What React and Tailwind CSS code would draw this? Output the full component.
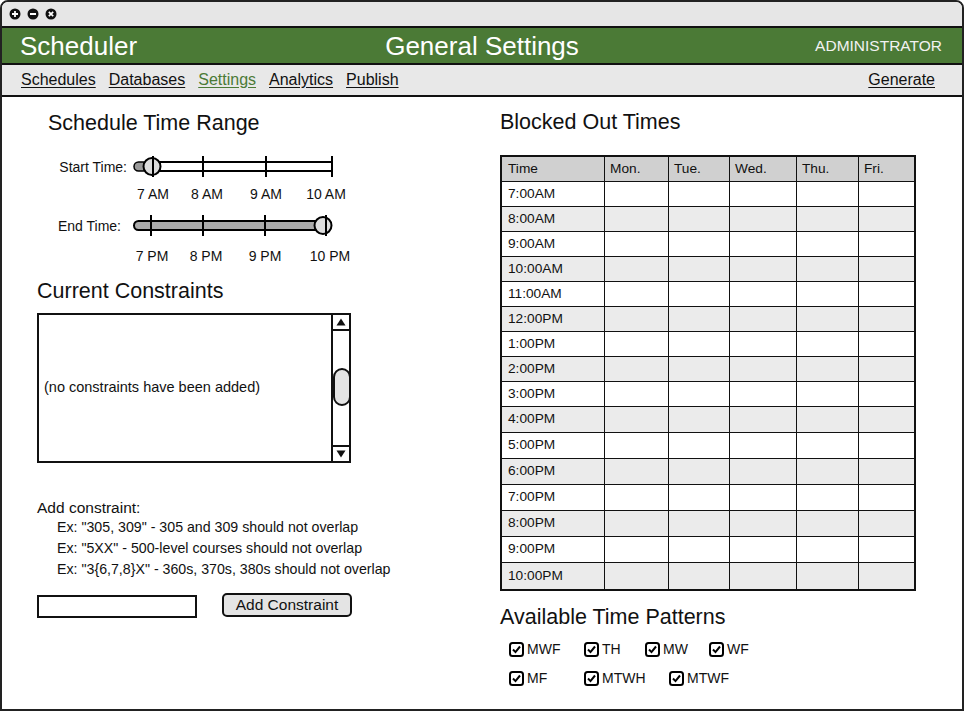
import React from "react";

const font = { fontFamily: '"Liberation Sans", Arial, sans-serif' };

function WinButton({ kind }) {
  return (
    <svg width="12" height="12" viewBox="0 0 12 12">
      <circle cx="6" cy="6" r="5.5" fill="#111" />
      {kind === "plus" && <path d="M3 6h6M6 3v6" stroke="#fff" strokeWidth="1.8" />}
      {kind === "minus" && <path d="M3 6h6" stroke="#fff" strokeWidth="1.8" />}
      {kind === "close" && <path d="M3.8 3.8l4.4 4.4M8.2 3.8l-4.4 4.4" stroke="#fff" strokeWidth="1.7" />}
    </svg>
  );
}

// slider drawing, x=0 maps to page x 131
function StartSlider() {
  return (
    <svg width="204" height="24" viewBox="0 0 204 24">
      <rect x="2" y="7" width="14" height="9" rx="4.5" fill="#999" stroke="#000" strokeWidth="1.5" />
      <rect x="14" y="7" width="186" height="9" fill="#fff" stroke="#000" strokeWidth="2" />
      <line x1="71" y1="1" x2="71" y2="22" stroke="#000" strokeWidth="2" />
      <line x1="134" y1="1" x2="134" y2="22" stroke="#000" strokeWidth="2" />
      <line x1="200" y1="1" x2="200" y2="22" stroke="#000" strokeWidth="2" />
      <circle cx="20" cy="11.5" r="8.5" fill="#ddd" stroke="#000" strokeWidth="2" />
      <line x1="21" y1="1" x2="21" y2="22" stroke="#000" strokeWidth="2" />
    </svg>
  );
}

function EndSlider() {
  return (
    <svg width="204" height="24" viewBox="0 0 204 24">
      <rect x="2" y="7" width="188" height="9" rx="4.5" fill="#aaa" stroke="#000" strokeWidth="2" />
      <line x1="19" y1="1" x2="19" y2="22" stroke="#000" strokeWidth="2" />
      <line x1="71" y1="1" x2="71" y2="22" stroke="#000" strokeWidth="2" />
      <line x1="133" y1="1" x2="133" y2="22" stroke="#000" strokeWidth="2" />
      <circle cx="191" cy="11.5" r="8.5" fill="#ddd" stroke="#000" strokeWidth="2" />
      <line x1="194" y1="1" x2="194" y2="22" stroke="#000" strokeWidth="2" />
    </svg>
  );
}

function Check({ label }) {
  return (
    <div className="flex items-center gap-[3px]">
      <svg width="15" height="15" viewBox="0 0 15 15">
        <rect x="1" y="1" width="13" height="13" rx="2.5" fill="#fff" stroke="#000" strokeWidth="2" />
        <path d="M4 7.5l2.5 2.6L11 4.5" fill="none" stroke="#000" strokeWidth="2" />
      </svg>
      <span className="text-[14px] text-[#111]">{label}</span>
    </div>
  );
}

const times = [
  "7:00AM", "8:00AM", "9:00AM", "10:00AM", "11:00AM", "12:00PM", "1:00PM", "2:00PM",
  "3:00PM", "4:00PM", "5:00PM", "6:00PM", "7:00PM", "8:00PM", "9:00PM", "10:00PM",
];
const days = ["Mon.", "Tue.", "Wed.", "Thu.", "Fri."];
const cols = "grid grid-cols-[103px_64px_61px_67px_62px_50px]";

export default function App() {
  return (
    <div style={font} className="w-[964px] h-[711px] bg-white text-[#111]">
      <div className="w-full h-full border-2 border-[#222] rounded-t-[8px] overflow-hidden flex flex-col">
        {/* title bar */}
        <div className="h-[26px] bg-[#e6e6e6] border-b-2 border-[#111] flex items-center gap-[6px] pl-[7px] shrink-0">
          <WinButton kind="plus" />
          <WinButton kind="minus" />
          <WinButton kind="close" />
        </div>

        {/* header */}
        <div className="h-[37px] bg-[#4b7a36] border-b-2 border-[#111] flex items-center shrink-0 text-white">
          <div className="pl-[18px] text-[26px] leading-none w-[320px]">Scheduler</div>
          <div className="flex-1 text-center text-[26px] leading-none">General Settings</div>
          <div className="w-[320px] text-right pr-[20px] text-[15.5px] leading-none text-[#f2f2f2]">ADMINISTRATOR</div>
        </div>

        {/* nav */}
        <div className="h-[32px] bg-[#e8e8e8] border-b-2 border-[#111] flex items-center shrink-0 text-[16px]">
          <div className="flex gap-[13px] pl-[19px]">
            <span className="underline underline-offset-2">Schedules</span>
            <span className="underline underline-offset-2">Databases</span>
            <span className="underline underline-offset-2 text-[#4b7a36]">Settings</span>
            <span className="underline underline-offset-2">Analytics</span>
            <span className="underline underline-offset-2">Publish</span>
          </div>
          <span className="ml-auto pr-[27px] underline underline-offset-2">Generate</span>
        </div>

        {/* content */}
        <div className="flex-1 flex">
          {/* left column */}
          <div className="w-[498px] flex flex-col">
            <div className="mt-[14px] ml-[46px] text-[21.5px] leading-[24px]">Schedule Time Range</div>

            <div className="mt-[20px] flex items-center h-[24px]">
              <span className="w-[126px] text-right text-[14px] pr-[1px]">Start Time:</span>
              <div className="ml-[4px]"><StartSlider /></div>
            </div>
            <div className="mt-[7px] flex text-[14px] leading-[16px]">
              <span className="ml-[126px] w-[50px] text-center">7 AM</span>
              <span className="ml-[4px] w-[50px] text-center">8 AM</span>
              <span className="ml-[9px] w-[50px] text-center">9 AM</span>
              <span className="ml-[10px] w-[50px] text-center">10 AM</span>
            </div>

            <div className="mt-[12px] flex items-center h-[24px]">
              <span className="w-[120px] text-right text-[14px] pr-[1px]">End Time:</span>
              <div className="ml-[10px]"><EndSlider /></div>
            </div>
            <div className="mt-[10px] flex text-[14px] leading-[16px]">
              <span className="ml-[125px] w-[50px] text-center">7 PM</span>
              <span className="ml-[4px] w-[50px] text-center">8 PM</span>
              <span className="ml-[9px] w-[50px] text-center">9 PM</span>
              <span className="ml-[15px] w-[50px] text-center">10 PM</span>
            </div>

            <div className="mt-[15px] ml-[35px] text-[21.5px] leading-[24px]">Current Constraints</div>

            <div className="mt-[10px] ml-[35px] w-[314px] h-[150px] border-2 border-[#111] flex">
              <div className="flex-1 flex items-center pl-[5px] text-[14.5px]">(no constraints have been added)</div>
              <div className="w-[18px] border-l-2 border-[#111] flex flex-col">
                <div className="h-[16px] border-b-2 border-[#111] flex items-center justify-center">
                  <svg width="10" height="8" viewBox="0 0 10 8"><path d="M5 0.5L9.5 7.5H0.5z" fill="#111" /></svg>
                </div>
                <div className="flex-1 flex flex-col">
                  <div className="mt-[37px] -mr-[2px] h-[38px] bg-[#e4e4e4] border-2 border-[#111] rounded-[9px]" />
                </div>
                <div className="h-[16px] border-t-2 border-[#111] flex items-center justify-center">
                  <svg width="10" height="8" viewBox="0 0 10 8"><path d="M0.5 0.5H9.5L5 7.5z" fill="#111" /></svg>
                </div>
              </div>
            </div>

            <div className="mt-[36px] ml-[35px] text-[15.5px] leading-[18px]">Add constraint:</div>
            <div className="ml-[55px] text-[14.2px] leading-[21px]">
              <div>Ex: "305, 309" - 305 and 309 should not overlap</div>
              <div>Ex: "5XX" - 500-level courses should not overlap</div>
              <div>Ex: "3{"{"}6,7,8{"}"}X" - 360s, 370s, 380s should not overlap</div>
            </div>

            <div className="mt-[13px] ml-[35px] flex items-start">
              <div className="mt-[2px] w-[160px] h-[23px] border-2 border-[#111] bg-white" />
              <div className="ml-[25px] w-[130px] h-[24px] border-2 border-[#111] rounded-[5px] bg-[#e4e4e4] flex items-center justify-center text-[15.5px]">
                Add Constraint
              </div>
            </div>
          </div>

          {/* right column */}
          <div className="flex flex-col">
            <div className="mt-[13px] text-[21.5px] leading-[24px]">Blocked Out Times</div>

            <div className="mt-[21px] w-[416px] border-2 border-[#111] text-[13.7px]">
              <div className={`${cols} h-[25px] bg-[#d0d0d0] border-b border-[#111]`}>
                <div className="pl-[6px] flex items-center border-r border-[#111]">Time</div>
                {days.map((d, i) => (
                  <div key={d} className={`pl-[5px] flex items-center ${i < 4 ? "border-r border-[#111]" : ""}`}>{d}</div>
                ))}
              </div>
              {times.map((t, r) => (
                <div
                  key={t}
                  className={`${cols} ${r < 9 ? "h-[25px]" : "h-[26px]"} ${r % 2 ? "bg-[#ebebeb]" : "bg-white"} ${r < 15 ? "border-b border-[#111]" : ""}`}
                >
                  <div className="pl-[6px] flex items-center border-r border-[#111]">{t}</div>
                  {days.map((d, i) => (
                    <div key={d} className={i < 4 ? "border-r border-[#111]" : ""} />
                  ))}
                </div>
              ))}
            </div>

            <div className="mt-[14px] text-[21.5px] leading-[24px]">Available Time Patterns</div>
            <div className="mt-[10px] ml-[9px] flex">
              <div className="w-[75px]"><Check label="MWF" /></div>
              <div className="w-[61px]"><Check label="TH" /></div>
              <div className="w-[64px]"><Check label="MW" /></div>
              <div><Check label="WF" /></div>
            </div>
            <div className="mt-[8px] ml-[9px] flex">
              <div className="w-[75px]"><Check label="MF" /></div>
              <div className="w-[85px]"><Check label="MTWH" /></div>
              <div><Check label="MTWF" /></div>
            </div>
          </div>
        </div>
      </div>
    </div>
  );
}
